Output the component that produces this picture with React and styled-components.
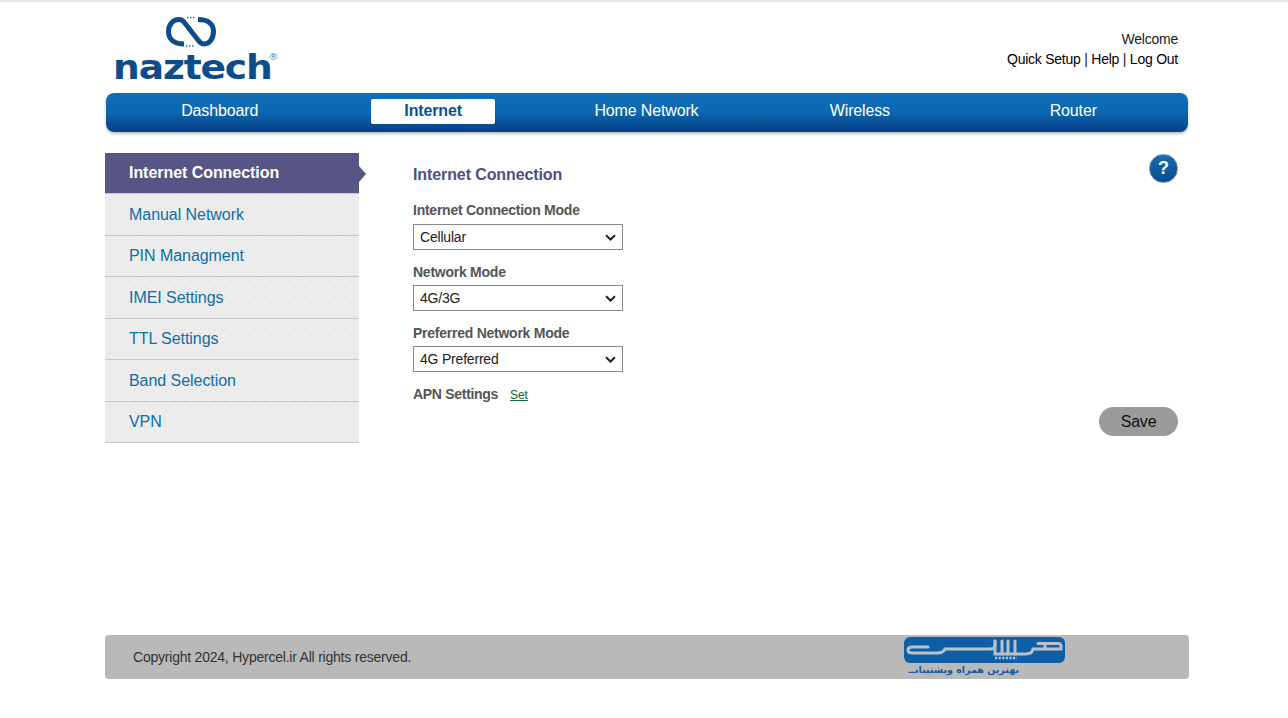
import React from "react";
import styled, { createGlobalStyle } from "styled-components";

const GlobalStyle = createGlobalStyle`
  html, body {
    margin: 0;
    padding: 0;
    background: #fff;
    font-family: "Liberation Sans", Arial, sans-serif;
  }
`;

const Page = styled.div`
  min-height: 716px;
  border-top: 2px solid #e6e8dc;
`;

const Wrap = styled.div`
  width: 1084px;
  margin-left: 105px;
`;

const Header = styled.header`
  height: 91px;
  display: flex;
  justify-content: space-between;
`;

const LogoBox = styled.div`
  width: 172px;
  margin-left: 10px;
  display: flex;
  flex-direction: column;
  align-items: flex-start;
`;

const LogoMark = styled.svg`
  display: block;
  width: 50px;
  height: 32px;
  margin: 14px 0 0 51px;
`;

const LogoText = styled.div`
  position: relative;
  margin: 3px 0 0 -2px;
  font-family: "DejaVu Sans", sans-serif;
  font-weight: 700;
  font-size: 33px;
  line-height: 34px;
  color: #0b4d8c;
  letter-spacing: -1px;
  transform: scaleX(1.14);
  transform-origin: left top;
`;

const Reg = styled.span`
  position: absolute;
  top: 1px;
  right: -6px;
  font-size: 9px;
  line-height: 10px;
  font-weight: 400;
  color: #5a8ab5;
  letter-spacing: 0;
`;

const UserLinks = styled.div`
  padding: 27px 11px 0 0;
  text-align: right;
  font-size: 14px;
  line-height: 20px;
  letter-spacing: -0.24px;
  color: #222;
`;

const TopLink = styled.a`
  color: #000;
  text-decoration: none;
`;

const Nav = styled.nav`
  width: 1082px;
  height: 39px;
  margin-left: 1px;
  padding: 0 8px 0 7px;
  box-sizing: border-box;
  display: grid;
  grid-template-columns: repeat(5, 1fr);
  border-radius: 8px;
  background: linear-gradient(#0e6cb6 0%, #0d69b2 45%, #0a4f96 78%, #073f86 100%);
  box-shadow: 0 2px 3px rgba(0, 0, 0, 0.25);
`;

const NavCell = styled.div`
  display: flex;
  justify-content: center;
  padding-top: 6px;
`;

const NavItem = styled.a`
  width: 124px;
  height: 25px;
  line-height: 24px;
  text-align: center;
  font-size: 16px;
  letter-spacing: -0.15px;
  border-radius: 2px;
  white-space: nowrap;
  color: ${(p) => (p.$active ? "#0b4f98" : "#fff")};
  font-weight: ${(p) => (p.$active ? 700 : 400)};
  background: ${(p) => (p.$active ? "#fff" : "transparent")};
`;

const Main = styled.main`
  height: 503px;
  padding-top: 21px;
  box-sizing: border-box;
  display: flex;
`;

const Side = styled.ul`
  list-style: none;
  margin: 0;
  padding: 0;
  width: 254px;
  flex: none;
`;

const SideItem = styled.li`
  position: relative;
  height: 41px;
  box-sizing: border-box;
  padding-left: 24px;
  font-size: 16px;
  line-height: 40px;
  color: ${(p) => (p.$active ? "#fff" : "#0f6ea8")};
  font-weight: ${(p) => (p.$active ? 700 : 400)};
  letter-spacing: -0.05px;
  background-color: ${(p) => (p.$active ? "#565586" : "#ececec")};
  background-image: ${(p) =>
    p.$active
      ? "none"
      : "radial-gradient(#dedede 0.6px, transparent 0.8px), radial-gradient(#e0e0e0 0.6px, transparent 0.8px)"};
  background-size: 10px 10px;
  background-position: 0 0, 5px 5px;
  border-bottom: 1px solid #c9c9c9;

  &:nth-child(even) {
    height: 42px;
    line-height: 41px;
  }

  ${(p) =>
    p.$active &&
    `&::after {
      content: "";
      position: absolute;
      top: 13px;
      left: 254px;
      border-left: 7px solid #565586;
      border-top: 8px solid transparent;
      border-bottom: 8px solid transparent;
    }`}
`;

const Content = styled.section`
  flex: 1;
  position: relative;
  padding: 12px 11px 0 54px;
`;

const Title = styled.h2`
  margin: 0 0 17px;
  font-size: 16px;
  line-height: 20px;
  letter-spacing: -0.1px;
  color: #4f4f85;
  font-weight: 700;
`;

const Field = styled.div`
  margin-bottom: 13px;

  & + & {
    padding-top: 1px;
  }
`;

const FieldLabel = styled.label`
  display: block;
  margin-bottom: 5px;
  font-size: 14px;
  line-height: 17px;
  letter-spacing: -0.25px;
  font-weight: 700;
  color: #555;

  ${Field} + ${Field} & {
    margin-bottom: 4px;
  }
`;

const SelectWrap = styled.div`
  position: relative;
  width: 210px;
`;

const Select = styled.select`
  display: block;
  width: 210px;
  height: 26px;
  padding: 0 24px 0 6px;
  box-sizing: border-box;
  appearance: none;
  border: 1px solid #8a8a8a;
  border-radius: 0;
  background: #fff;
  font-family: "Liberation Sans", Arial, sans-serif;
  font-size: 14px;
  letter-spacing: -0.2px;
  color: #222;
`;

const Chevron = styled.svg`
  position: absolute;
  top: 10px;
  right: 7px;
  width: 11px;
  height: 7px;
  pointer-events: none;
`;

const ApnRow = styled.div`
  display: flex;
  align-items: baseline;
  gap: 12px;
  padding-top: 1px;
  font-size: 14px;
  line-height: 17px;
  letter-spacing: -0.3px;
  font-weight: 700;
  color: #555;
`;

const SetLink = styled.a`
  font-size: 12px;
  font-weight: 400;
  letter-spacing: -0.1px;
  color: #0a6b3a;
  text-decoration: underline;
`;

const HelpButton = styled.div`
  position: absolute;
  top: 1px;
  right: 11px;
  width: 29px;
  height: 29px;
  border-radius: 50%;
  box-sizing: border-box;
  border: 1px solid #5d8ab8;
  background: linear-gradient(#1a6ab2, #0a4a8e);
  color: #fff;
  font-size: 18px;
  font-weight: 700;
  line-height: 26px;
  text-align: center;
`;

const SaveRow = styled.div`
  display: flex;
  justify-content: flex-end;
  margin-top: 3px;
`;

const SaveButton = styled.button`
  width: 79px;
  height: 29px;
  border: 0;
  border-radius: 15px;
  background: #9b9b9b;
  color: #111;
  font-family: "Liberation Sans", Arial, sans-serif;
  font-size: 16px;
  letter-spacing: -0.2px;
  padding: 0;
`;

const Footer = styled.footer`
  height: 44px;
  padding-left: 28px;
  display: flex;
  align-items: center;
  background: #b9b9b9;
  border-radius: 4px;
  font-size: 14px;
  letter-spacing: -0.22px;
  color: #333;
`;

const Copy = styled.span`
  width: 771px;
  flex: none;
`;

const Brand = styled.div`
  display: flex;
  flex-direction: column;
  width: 161px;
  padding-bottom: 2px;
`;

const BrandMark = styled.svg`
  display: block;
  width: 161px;
  height: 26px;
`;

const BrandText = styled.span`
  direction: rtl;
  width: 115px;
  font-family: "DejaVu Sans", sans-serif;
  font-weight: 700;
  font-size: 9.5px;
  line-height: 13px;
  letter-spacing: 0;
  color: #1c5a9f;
  white-space: nowrap;
`;

const tabs = ["Dashboard", "Internet", "Home Network", "Wireless", "Router"];
const menu = [
  "Internet Connection",
  "Manual Network",
  "PIN Managment",
  "IMEI Settings",
  "TTL Settings",
  "Band Selection",
  "VPN",
];
const fields = [
  ["Internet Connection Mode", "Cellular"],
  ["Network Mode", "4G/3G"],
  ["Preferred Network Mode", "4G Preferred"],
];

export default function App() {
  return (
    <Page>
      <GlobalStyle />
      <Wrap>
        <Header>
          <LogoBox>
            <LogoMark viewBox="0 0 50 32">
              <path
                d="M18 28 C8 28 2.5 23 2.5 15.5 C2.5 8 7.5 3.5 13 3.5 Q16 3.5 18 6 L32 24 Q35 28 38 28 C44 28 47.5 22 47.5 15.5 C47.5 8 42 3.5 32 3.5"
                fill="none"
                stroke="#0b4d8c"
                strokeWidth="5"
              />
              <path d="M21 1.5 H30 M20 30 H29" stroke="#2f6ea6" strokeWidth="1.5" strokeDasharray="1.5 1.5" fill="none" />
            </LogoMark>
            <LogoText>
              naztech<Reg>®</Reg>
            </LogoText>
          </LogoBox>
          <UserLinks>
            <div>Welcome</div>
            <div>
              <TopLink>Quick Setup</TopLink> | <TopLink>Help</TopLink> | <TopLink>Log Out</TopLink>
            </div>
          </UserLinks>
        </Header>
        <Nav>
          {tabs.map((t) => (
            <NavCell key={t}>
              <NavItem $active={t === "Internet"}>{t}</NavItem>
            </NavCell>
          ))}
        </Nav>
        <Main>
          <Side>
            {menu.map((m, i) => (
              <SideItem key={m} $active={i === 0}>
                {m}
              </SideItem>
            ))}
          </Side>
          <Content>
            <HelpButton>?</HelpButton>
            <Title>Internet Connection</Title>
            {fields.map(([label, value]) => (
              <Field key={label}>
                <FieldLabel>{label}</FieldLabel>
                <SelectWrap>
                  <Select defaultValue={value}>
                    <option>{value}</option>
                  </Select>
                  <Chevron viewBox="0 0 11 7">
                    <path d="M1 1.2 L5.5 5.5 L10 1.2" fill="none" stroke="#222" strokeWidth="2" />
                  </Chevron>
                </SelectWrap>
              </Field>
            ))}
            <ApnRow>
              APN Settings <SetLink>Set</SetLink>
            </ApnRow>
            <SaveRow>
              <SaveButton>Save</SaveButton>
            </SaveRow>
          </Content>
        </Main>
        <Footer>
          <Copy>Copyright 2024, Hypercel.ir All rights reserved.</Copy>
          <Brand>
            <BrandMark viewBox="0 0 161 26">
              <rect width="161" height="26" rx="6" fill="#0f5fa8" />
              <g fill="none" stroke="#b9c0c6" strokeWidth="3" strokeLinecap="round">
                <path d="M24 10 H8 Q4 10 4 13 Q4 16 8 16 H34 Q39 16 41 12 H86 Q91 12 91 8 V4" />
                <path d="M91 4 V17 H122 Q128 17 129 12 H157 V9 Q157 6.5 154 6.5 H134" />
                <path d="M98 4 V17 M104 4 V17 M111 4 V17 M141 7 V11" />
              </g>
              <path d="M91 21 H113" stroke="#b9c0c6" strokeWidth="2.6" strokeDasharray="2.2 1.4" fill="none" />
            </BrandMark>
            <BrandText>بهترین همراه وپشتیبانــ</BrandText>
          </Brand>
        </Footer>
      </Wrap>
    </Page>
  );
}
